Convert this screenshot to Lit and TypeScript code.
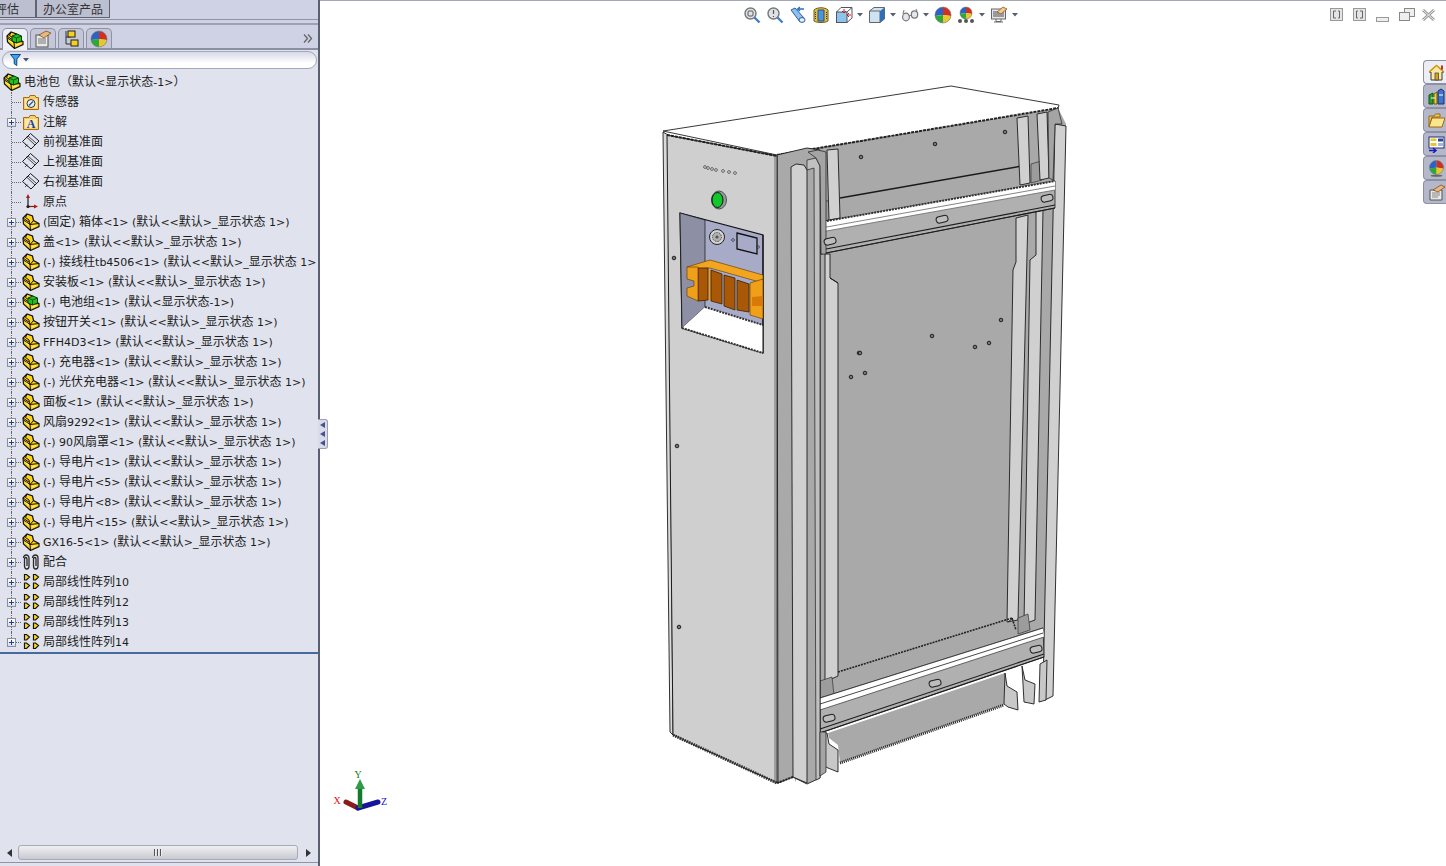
import { LitElement, html, css, svg } from 'lit';
import { customElement } from 'lit/decorators.js';

// small helper: draws an icon in a fixed box
const ic = (w: number, h: number, body: unknown) =>
  html`<svg width=${w} height=${h} viewBox="0 0 ${w} ${h}">${body}</svg>`;

const partBody = svg`
  <path d="M1 5 L5 1 L10.5 3 L11.5 7.5 L17 10.5 L17 13.5 L8.5 17.5 L1.5 11 Z" fill="#ffd318" stroke="#111" stroke-width="1.2"/>
  <path d="M1 5 L7.5 9.5 L7 7 L3.5 4.5 L5 1 M7.5 9.5 L8 11.5 L11.5 7.5 M8.5 17.5 L8 11.5 L1.5 7 M8 11.5 L17 10.5" fill="none" stroke="#111"/>
  <path d="M3.5 9.5 L6.5 12 M10 14 L14 12.5" stroke="#fff3a0" fill="none"/>`;

const icons: Record<string, unknown> = {
  part: ic(18, 18, partBody),
  asm: ic(18, 18, svg`${partBody}<path d="M6 5 L11 3 L15.5 5 L15.5 10 L10.5 12 L6 10 Z" fill="#20c020" stroke="#063e06"/><path d="M6 5 L10.5 7 L15.5 5 M10.5 7 V12" fill="none" stroke="#063e06" stroke-width=".8"/>`),
  sensor: ic(18, 18, svg`<path d="M1.5 4.5 H7 L8 2.5 H13 L14 4.5 H16.5 V16.5 H1.5 Z" fill="#f6cf6a" stroke="#a86a10"/><rect x="3" y="6" width="12" height="9" fill="#fbe7a8"/><circle cx="9" cy="10.5" r="4" fill="#e8eef6" stroke="#333"/><path d="M7 12.5 L11 8.5" stroke="#2a4fa0" stroke-width="1.2"/>`),
  note: ic(18, 18, svg`<path d="M1.5 4.5 H7 L8 2.5 H13 L14 4.5 H16.5 V16.5 H1.5 Z" fill="#f6cf6a" stroke="#a86a10"/><rect x="3" y="6" width="12" height="9" fill="#fbe7a8"/><text x="9" y="15" text-anchor="middle" font-family="Liberation Serif" font-weight="700" font-size="12" fill="#1c3fb0">A</text>`),
  plane: ic(18, 18, svg`<path d="M8.5 .5 L17 8 L9 16 L.5 8.5 Z" fill="none" stroke="#1a1a1a"/><path d="M4.5 4 L13 12 M6 3 L14.5 10.5" stroke="#1a1a1a" stroke-width=".8"/><path d="M3 11 L6 14 M3 14 L6 11" stroke="#1a1a1a" stroke-dasharray="1 1"/>`),
  origin: ic(18, 18, svg`<path d="M6 15 V3" stroke="#1a1a1a" stroke-width="1.2"/><path d="M6 1 L4 5 H8 Z" fill="#b01818"/><path d="M6 13.5 H14" stroke="#8c1515" stroke-width="1.2"/><path d="M16 13.5 L12 11.5 V15.5 Z" fill="#b01818"/><circle cx="6" cy="13.5" r="1.6" fill="#222"/>`),
  mate: ic(18, 18, svg`<path d="M1.5 5 C1.5 1 7 1 7 5 V13 C7 17 2.5 17 2.5 13 V6 C2.5 4 5 4 5 6 V13" fill="none" stroke="#2a2a2a" stroke-width="1.3"/><path d="M10.5 5 C10.5 1 16 1 16 5 V13 C16 17 11.5 17 11.5 13 V6 C11.5 4 14 4 14 6 V13" fill="none" stroke="#2a2a2a" stroke-width="1.3"/>`),
  pattern: ic(18, 18, svg`
    <g fill="#ffd818" stroke="#111" stroke-width="1.2">
      <path d="M2.5 1.5 H4.5 L7.5 4 L4.5 7 H2.5 Z"/><path d="M11.5 1.5 H13.5 L16.5 4 L13.5 7 H11.5 Z"/>
      <path d="M2.5 10 H4.5 L7.5 12.5 L4.5 15.5 H2.5 Z"/><path d="M11.5 10 H13.5 L16.5 12.5 L13.5 15.5 H11.5 Z"/>
    </g>`),
};

const ball = (id: string, cx: number, cy: number, r: number) => svg`
  <path d="M${cx} ${cy} L${cx} ${cy - r} A${r} ${r} 0 0 0 ${cx - r} ${cy + 1} Z" fill="#2a62c8"/>
  <path d="M${cx} ${cy} L${cx} ${cy - r} A${r} ${r} 0 0 1 ${cx + r} ${cy + 1} Z" fill="#d03020"/>
  <path d="M${cx} ${cy} L${cx - r} ${cy + 1} A${r} ${r} 0 0 0 ${cx} ${cy + r} Z" fill="#30a838"/>
  <path d="M${cx} ${cy} L${cx + r} ${cy + 1} A${r} ${r} 0 0 1 ${cx} ${cy + r} Z" fill="#e8c830"/>
  <circle cx=${cx} cy=${cy} r=${r} fill="none" stroke="#777" stroke-width=".6" data-k=${id}/>`;

const zoomGlass = svg`<circle cx="7.5" cy="7.5" r="5.5" fill="#dfe3e8" stroke="#777" stroke-width="1.4"/><path d="M11.5 11.5 L16.5 16.5" stroke="#3f7fd0" stroke-width="2.4"/>`;

const tools: { icon: unknown; arrow?: boolean }[] = [
  { icon: ic(18, 18, svg`${zoomGlass}<rect x="5" y="5" width="5" height="5" rx="1" fill="none" stroke="#555"/>`) },
  { icon: ic(18, 18, svg`${zoomGlass}<path d="M7.5 4 V8 M7.5 10 V11" stroke="#555" stroke-width="1.2"/>`) },
  { icon: ic(18, 18, svg`<path d="M2 4 L6 2 L15 12 L11 16 Z" fill="#8cc0ee" stroke="#2b5f98"/><ellipse cx="13" cy="14" rx="3" ry="2.4" fill="#e4f2fc" stroke="#2b5f98"/><path d="M15 3 H9 M11 1 L8.5 3 L11 5" fill="none" stroke="#2f6fc0" stroke-width="1.3"/>`) },
  { icon: ic(18, 18, svg`<path d="M2 4 C5 1 13 1 16 4 V15 C13 17 5 17 2 15 Z" fill="#e2c040" stroke="#705a18"/><path d="M6 4 H12 V15 H6 Z" fill="#4f94d8" stroke="#264f80"/><path d="M3.5 6 V14 M14.5 6 V14" stroke="#3a3a3a" stroke-dasharray="1 1"/>`) },
  { icon: ic(18, 18, svg`<path d="M6 1.5 H17 V12 L12 16.5 H1.5 V6 Z" fill="#fff" stroke="#555"/><rect x="1.5" y="6" width="10.5" height="10.5" fill="#8cc4ee" stroke="#555"/><path d="M12 6 L17 1.5" stroke="#555"/><path d="M9 3 V7 M7 5 L9 7 L11 5 M16 9 H12 M14 7 L12 9 L14 11" fill="none" stroke="#c02020"/>`), arrow: true },
  { icon: ic(18, 18, svg`<path d="M1.5 5 L6 1.5 H16.5 V13 L12 16.5 H1.5 Z" fill="#cfe2f3" stroke="#666"/><path d="M1.5 5 H12 V16.5" fill="none" stroke="#666"/><path d="M12 5 L16.5 1.5 V13 L12 16.5 Z" fill="#2f6fb8"/>`), arrow: true },
  { icon: ic(18, 18, svg`<g fill="#e4e8ee" stroke="#777" stroke-width="1.2"><ellipse cx="5" cy="11" rx="3.4" ry="3.8"/><ellipse cx="13.5" cy="8.5" rx="3.2" ry="3.6"/></g><path d="M8 10 L10.5 9 M2 8 L3 4 M16 5 L15 3" stroke="#777" fill="none"/>`), arrow: true },
  { icon: ic(18, 18, ball('a', 9, 9, 8)) },
  { icon: ic(18, 18, svg`${ball('b', 9, 7, 6)}<g fill="#555"><circle cx="3" cy="15" r="2"/><circle cx="9" cy="15" r="2"/><circle cx="15" cy="15" r="2"/></g>`), arrow: true },
  { icon: ic(18, 18, svg`<rect x="1.5" y="3" width="14" height="10" fill="#e6e6e6" stroke="#666"/><rect x="3" y="5" width="11" height="6" fill="#9a9a9a"/><path d="M6 13 V15.5 H11 V13 M4 16 H13" fill="none" stroke="#666"/><path d="M7 6 L13 1 L17 3 L11 8 Z" fill="#f0c890" stroke="#8a5a20" stroke-width=".8"/>`), arrow: true },
];

const taskIcons: unknown[] = [
  ic(17, 17, svg`<path d="M1 8 L8.5 1.5 L16 8 L14 8 V16 H3 V8 Z" fill="#f7e9a8" stroke="#3a3a3a"/><path d="M1 8 L8.5 1.5 L16 8" fill="none" stroke="#d99a10" stroke-width="1.6"/><rect x="7" y="9" width="3.5" height="7" fill="#d8a020" stroke="#3a3a3a" stroke-width=".7"/><rect x="13" y="1.5" width="2" height="4" fill="#c03020"/>`),
  ic(17, 17, svg`<path d="M1 7 L5 5 V16 H1 Z" fill="#28a028" stroke="#14501a"/><path d="M6 6 L9 4 V16 H6 Z" fill="#f0d030" stroke="#6a5a10"/><path d="M10 3 L13 1 L16 3 V16 H10 Z" fill="#3f74d0" stroke="#1a3060"/><path d="M3 10 H7 M11 7 H15" stroke="#fff"/>`),
  ic(17, 17, svg`<path d="M1 4 H6 L7.5 2 H12 V5 H4 L1 15 Z" fill="#f0c860" stroke="#9a6a10"/><path d="M4 6 H17 L14 15 H1 Z" fill="#fbe58e" stroke="#9a6a10"/>`),
  ic(17, 17, svg`<rect x="1" y="1" width="15" height="11" fill="#fff" stroke="#22306a"/><rect x="2.5" y="2.5" width="6" height="2.5" fill="#e8c830"/><rect x="2.5" y="7" width="6" height="3" fill="#e8c830"/><rect x="10" y="2.5" width="5" height="3" fill="#2a4aa0"/><rect x="10" y="7" width="5" height="3" fill="#a8b4d8"/><path d="M1 14.5 H7 M5 12 L8 14.5 L5 17" fill="none" stroke="#1a1ac0" stroke-width="1.5"/>`),
  ic(17, 17, svg`${ball('c', 8.5, 7.5, 7)}<ellipse cx="8.5" cy="15.8" rx="6" ry="1" fill="#666"/>`),
  ic(17, 17, svg`<path d="M2 6 H14 V16 H2 Z" fill="#e8e8e8" stroke="#555"/><path d="M4 9 H12 M4 11 H12 M4 13 H10" stroke="#888"/><path d="M5 6 L13 1 L17 3 L10 8 Z" fill="#e8b880" stroke="#80501c" stroke-width=".8"/>`),
];

const cfg = '(默认<<默认>_显示状态 1>)';
const rows: { icon: string; text: string; exp?: boolean }[] = [
  { icon: 'sensor', text: '传感器' },
  { icon: 'note', text: '注解', exp: true },
  { icon: 'plane', text: '前视基准面' },
  { icon: 'plane', text: '上视基准面' },
  { icon: 'plane', text: '右视基准面' },
  { icon: 'origin', text: '原点' },
  { icon: 'part', text: `(固定) 箱体<1> ${cfg}`, exp: true },
  { icon: 'part', text: `盖<1> ${cfg}`, exp: true },
  { icon: 'part', text: `(-) 接线柱tb4506<1> ${cfg}`, exp: true },
  { icon: 'part', text: `安装板<1> ${cfg}`, exp: true },
  { icon: 'asm', text: '(-) 电池组<1> (默认<显示状态-1>)', exp: true },
  { icon: 'part', text: `按钮开关<1> ${cfg}`, exp: true },
  { icon: 'part', text: `FFH4D3<1> ${cfg}`, exp: true },
  { icon: 'part', text: `(-) 充电器<1> ${cfg}`, exp: true },
  { icon: 'part', text: `(-) 光伏充电器<1> ${cfg}`, exp: true },
  { icon: 'part', text: `面板<1> ${cfg}`, exp: true },
  { icon: 'part', text: `风扇9292<1> ${cfg}`, exp: true },
  { icon: 'part', text: `(-) 90风扇罩<1> ${cfg}`, exp: true },
  { icon: 'part', text: `(-) 导电片<1> ${cfg}`, exp: true },
  { icon: 'part', text: `(-) 导电片<5> ${cfg}`, exp: true },
  { icon: 'part', text: `(-) 导电片<8> ${cfg}`, exp: true },
  { icon: 'part', text: `(-) 导电片<15> ${cfg}`, exp: true },
  { icon: 'part', text: `GX16-5<1> ${cfg}`, exp: true },
  { icon: 'mate', text: '配合', exp: true },
  { icon: 'pattern', text: '局部线性阵列10', exp: true },
  { icon: 'pattern', text: '局部线性阵列12', exp: true },
  { icon: 'pattern', text: '局部线性阵列13', exp: true },
  { icon: 'pattern', text: '局部线性阵列14', exp: true },
];

// latin runs are 11px, chinese runs 12px, like the original tree font
const label = (t: string) =>
  t.split(/([\u3000-\u303f\u4e00-\u9fff\uff00-\uffef]+)/).map((p, i) =>
    i % 2 ? html`<span class="cjk">${p}</span>` : p);

const holes: [number, number][] = [
  [861, 157], [935, 144], [1005, 132], [859, 353], [851, 377], [865, 373], [932, 336],
  [975, 347], [989, 343], [1001, 320], [674, 258], [677, 446], [679, 627], [860, 353],
];
const slots: [number, number][] = [
  [830, 241], [942, 219], [1047, 198], [829, 718], [935, 683], [1036, 649],
];

const model = svg`
  <!-- lid -->
  <path d="M663 131 L951 86 L1059 105 L1058 109 L777 155 Z" fill="#fff" stroke="#222" stroke-width=".9"/>
  <!-- back, down to the lower bar -->
  <path d="M777 155 L1058 108 L1066 124 L1052 650 L820 733 L795 782 Z" fill="#a9a9a9"/>
  <path d="M777 155 L1058 108" stroke="#222" stroke-width="2" stroke-dasharray="3 1" fill="none"/>

  <!-- upper ledge -->
  <path d="M840 198 L1022 166" stroke="#1a1a1a" stroke-width="1.6" fill="none"/>
  <path d="M821 202 L832 200 L835 218 L821 222 Z" fill="#9c9c9c" stroke="#333" stroke-width=".7"/>
  <path d="M1031 164 L1041 161 L1042 180 L1031 183 Z" fill="#9c9c9c" stroke="#333" stroke-width=".7"/>
  <!-- upright strips, top -->
  <g fill="#d0d0d0" stroke="#1c1c1c" stroke-width=".9">
    <path d="M827 150 L838 149 L840 218 L829 220 Z"/>
    <path d="M1017 118 L1028 116 L1030 183 L1020 185 Z"/>
    <path d="M1037 114 L1047 112 L1049 178 L1040 180 Z"/>
    <path d="M1055 124 L1066 126 L1053 696 L1045 700 L1043 690 Z"/>
  </g>
  <path d="M1048 112 L1058 108 L1062 124 L1055 124 L1053 180 L1049 178 Z" fill="#a4a4a4" stroke="#222" stroke-width=".7"/>

  <!-- main panel side strips -->
  <g fill="#d0d0d0" stroke="#1c1c1c" stroke-width=".9">
    <path d="M825 254 L830 254 L830 278 L838 283 L838 676 L825 682 Z"/>
    <path d="M1016 218 L1028 215 L1018 620 L1007 622 L1013 270 L1016 262 Z"/>
    <path d="M1036 212 L1043 210 L1035 620 L1024 624 L1030 260 L1036 255 Z"/>
  </g>
  <path d="M838 283 L830 278 M1008 622 L1013 618" stroke="#1c1c1c" fill="none"/>
  <!-- lower ledge -->
  <path d="M838 672 L1012 618 L1016 630" fill="none" stroke="#222" stroke-width="1.6" stroke-dasharray="2 1"/>
  <path d="M820 681 L832 677 L834 695 L820 698 Z" fill="#9c9c9c" stroke="#333" stroke-width=".7"/>
  <path d="M1018 618 L1028 614 L1030 630 L1018 634 Z" fill="#9c9c9c" stroke="#333" stroke-width=".7"/>

  <!-- upper bar -->
  <path d="M821 222 L1055 181 L1055 208 L821 254 Z" fill="#b0b0b0" stroke="#222" stroke-width=".8"/>
  <path d="M821 222 L1055 181 L1055 190 L821 232 Z" fill="#fff"/>
  <path d="M821 222 L1055 181" stroke="#333" stroke-width="2" stroke-dasharray="2 1" fill="none"/>
  <path d="M821 228 L1055 186 M821 232 L1055 190" stroke="#666" stroke-width=".8" fill="none"/>
  <path d="M821 250 L1055 205 M821 254 L1055 208" stroke="#1c1c1c" stroke-width="1.1" fill="none"/>

  <!-- lower bar -->
  <path d="M820 698 L1043 628 L1044 657 L820 733 Z" fill="#b0b0b0" stroke="#222" stroke-width=".8"/>
  <path d="M820 698 L1043 628 L1044 637 L820 710 Z" fill="#fff"/>
  <path d="M820 698 L1043 628 M820 704 L1043 633" stroke="#333" stroke-width=".9" fill="none"/>
  <path d="M820 710 L1044 637" stroke="#555" stroke-width=".9" fill="none"/>
  <path d="M820 729 L1044 654 M820 733 L1044 657" stroke="#1c1c1c" stroke-width="1.1" fill="none"/>

  <!-- under the lower bar -->
  <path d="M828 733 L1005 673 L1004 705 L840 763 L838 745 L829 738 Z" fill="#a9a9a9"/>
  <path d="M840 763 L1004 705" stroke="#222" stroke-width="3" stroke-dasharray="1 1" fill="none"/>
  <g fill="#c8c8c8" stroke="#1c1c1c" stroke-width=".9">
    <path d="M827 733 L829 744 L838 750 L838 772 L828 768 L820 764 L820 735 Z"/>
    <path d="M1005 673 L1007 686 L1017 692 L1018 710 L1008 707 L1004 704 Z"/>
    <path d="M1022 666 L1025 680 L1035 684 L1034 704 L1024 702 Z"/>
  </g>
  <path d="M1040 664 L1047 660 L1046 700 L1039 702 Z" fill="#c8c8c8" stroke="#1c1c1c" stroke-width=".9"/>

  <!-- corner post -->
  <path d="M777 155 L807 148 L820 150 L820 778 L807 784 L793 777 L778 783 Z" fill="#a9a9a9" stroke="#1c1c1c" stroke-width=".9"/>
  <path d="M791 167 L796 164 L804 165 L807 170 L807 783 L793 777 Z" fill="#d0d0d0" stroke="#1c1c1c" stroke-width=".9"/>
  <path d="M807 160 L816 158 L820 166 L820 778 L816 780 L814 168 L807 170 Z" fill="#c0c0c0" stroke="#1c1c1c" stroke-width=".7"/>
  <path d="M808 152 L818 150 L826 152 L826 254 L821 254 L820 166 L816 158 Z" fill="#a4a4a4" stroke="#1c1c1c" stroke-width=".7"/>
  <path d="M820 732 L826 732 L826 772 L820 776 Z" fill="#a4a4a4" stroke="#1c1c1c" stroke-width=".7"/>

  <!-- front face -->
  <path d="M663 132 L668 135 L673 735 L670 732 Z" fill="#dadada" stroke="#1c1c1c" stroke-width=".9"/>
  <path d="M667 135 L777 156 L777 783 L673 735 Z" fill="#cfcfcf" stroke="#1c1c1c" stroke-width="1"/>
  <path d="M667 135 L777 156" stroke="#222" stroke-width="2" stroke-dasharray="3 1" fill="none"/>
  <path d="M673 735 L777 783" stroke="#333" stroke-width="3" stroke-dasharray="1.5 1" fill="none"/>
  <path d="M777 783 L793 777" stroke="#222" stroke-width="2" stroke-dasharray="2 1" fill="none"/>
  <path d="M775 156 V783" stroke="#444" stroke-width=".7" fill="none"/>

  <!-- window in the front face -->
  <path d="M680 213 L763 235 L763 353 L682 328 Z" fill="#a8abc8" stroke="#111" stroke-width="1.2"/>
  <path d="M680 213 L705 220 L705 307 L682 328 Z" fill="#8d90a4" stroke="#111" stroke-width=".7"/>
  <path d="M682 328 L705 307 L763 325 L763 353 Z" fill="#fff"/>
  <path d="M705 307 L763 325" stroke="#333" stroke-width="2" stroke-dasharray="2 1" fill="none"/>
  <path d="M682 328 L763 353" stroke="#333" stroke-width="2" stroke-dasharray="2 1" fill="none"/>
  <path d="M763 235 V353" stroke="#111" fill="none"/>

  <!-- connector and plate -->
  <circle cx="717" cy="237" r="7.5" fill="#d4d4d4" stroke="#222"/>
  <circle cx="717" cy="237" r="4.5" fill="#b0b0b0" stroke="#333" stroke-width=".8" stroke-dasharray="1.5 1"/>
  <circle cx="717" cy="237" r="1.6" fill="#555"/>
  <path d="M737 233 L757 238 L757 254 L737 249 Z" fill="#a8abc8" stroke="#111" stroke-width="1.3"/>
  <circle cx="733" cy="240" r="1.4" fill="none" stroke="#333" stroke-width=".7"/>
  <circle cx="758" cy="247" r="1.4" fill="none" stroke="#333" stroke-width=".7"/>

  <!-- orange terminal block -->
  <path d="M687 267 L710 260 L763 275 L763 283 L710 268 L697 269 Z" fill="#f2a620" stroke="#5a3000" stroke-width=".6"/>
  <path d="M698 268 L708 268 L708 300 L698 301 Z" fill="#a85806" stroke="#3a2000" stroke-width=".8"/>
  <path d="M687 267 L698 267 L698 301 L687 296 L687 288 L694 286 L694 281 L687 279 Z" fill="#f0a018" stroke="#5a3000" stroke-width=".6"/>
  <path d="M709 270 L711 270 L711 301 L709 300 Z" fill="#f0a018"/>
  <path d="M711 270 L722 274 L722 304 L711 301 Z" fill="#a85806" stroke="#3a2000" stroke-width=".8"/>
  <path d="M724 275 L735 278 L735 310 L724 306 Z" fill="#a85806" stroke="#3a2000" stroke-width=".8"/>
  <path d="M737 280 L749 284 L749 312 L737 310 Z" fill="#a85806" stroke="#3a2000" stroke-width=".8"/>
  <path d="M750 283 L763 279 L763 319 L750 315 Z" fill="#f0a018" stroke="#5a3000" stroke-width=".6"/>
  <path d="M752 297 L763 296 L763 306 L752 306 Z" fill="#d87a08"/>

  <!-- push button -->
  <ellipse cx="719" cy="200" rx="7.5" ry="9" fill="#9a9a9a" stroke="#333" stroke-width=".8"/>
  <ellipse cx="717.5" cy="200" rx="5.5" ry="7.5" fill="#0fc82c" stroke="#111"/>

  <!-- small dots above the button -->
  ${[705, 708, 712, 716, 723, 729, 735].map((x, i) => svg`<circle cx=${x} cy=${167 + i} r="1.4" fill="#e0e0e0" stroke="#333" stroke-width=".7"/>`)}

  <!-- holes and slots -->
  ${holes.map(([x, y]) => svg`<circle cx=${x} cy=${y} r="1.8" fill="#777" stroke="#222"/>`)}
  ${slots.map(([x, y]) => svg`<rect x=${x - 6} y=${y - 3} width="12" height="6.5" rx="3.2" transform="rotate(-14 ${x} ${y})" fill="#bdbdbd" stroke="#1c1c1c"/>`)}

  <!-- triad -->
  <path d="M358 808 L346 802" stroke="#8c1c1c" stroke-width="5" stroke-linecap="round"/>
  <path d="M358 808 L378 802" stroke="#16169a" stroke-width="5" stroke-linecap="round"/>
  <path d="M360 808 V788" stroke="#157a2a" stroke-width="4.5"/>
  <path d="M360 779 L355 789 H365 Z" fill="#2f9a48"/>
  <g font-family="Liberation Serif" font-size="10" text-anchor="middle">
    <text x="358" y="778" fill="#0e7a20">Y</text>
    <text x="337" y="804" fill="#e01010">X</text>
    <text x="384" y="805" fill="#1010e0">Z</text>
  </g>
`;

@customElement('app-root')
export class AppRoot extends LitElement {
  static styles = css`
    :host {
      display: flex;
      width: 1446px;
      height: 866px;
      overflow: hidden;
      background: #fff;
      font-family: "DejaVu Sans", "Noto Sans CJK SC", sans-serif;
      font-size: 11px;
      color: #1c1c1c;
    }
    svg { display: block; flex: none; }

    .side {
      flex: none;
      box-sizing: border-box;
      width: 320px;
      height: 866px;
      display: flex;
      flex-direction: column;
      background: #e0e3ed;
      border-right: 2px solid #5b6070;
    }
    .head {
      flex: none;
      height: 50px;
      box-sizing: border-box;
      background: #ced2e4;
      border-bottom: 2px solid #8a8fa2;
    }
    .docs {
      display: flex;
      height: 19px;
      overflow: hidden;
      border-bottom: 1px solid #8f93a4;
    }
    .doc {
      box-sizing: border-box;
      height: 18px;
      background: #bcbfd0;
      border: 1px solid #5f6372;
      border-top: none;
      font-family: "Noto Sans CJK SC", sans-serif;
      font-size: 12px;
      line-height: 17px;
      text-align: center;
      color: #333;
    }
    .doc.a { width: 37px; margin-left: -1px; text-align: left; text-indent: -5px; overflow: hidden; white-space: nowrap; }
    .doc.b { width: 74px; }
    .rule { height: 2px; margin-top: 3px; background: #9da1b2; }
    .ftabs { display: flex; align-items: flex-end; gap: 2px; padding: 3px 0 0 2px; height: 23px; box-sizing: border-box; }
    .ftab {
      box-sizing: border-box;
      width: 26px;
      height: 20px;
      display: flex;
      align-items: center;
      justify-content: center;
      background: #c3c7d8;
      border: 1px solid #8e92a4;
      border-bottom: none;
      border-radius: 5px 5px 0 0;
    }
    .ftab.on { background: #eef0f6; height: 22px; margin-bottom: -2px; }
    .more { margin-left: auto; margin-right: 5px; margin-bottom: 5px; }

    .filter {
      flex: none;
      box-sizing: border-box;
      height: 18px;
      margin: 1px 0 1px 2px;
      width: 315px;
      display: flex;
      align-items: center;
      gap: 2px;
      padding-left: 7px;
      border: 1px solid #a4a8b8;
      border-radius: 9px;
      background: linear-gradient(#d6d9e8, #fff 70%);
    }

    .tree {
      flex: none;
      height: 584px;
      box-sizing: border-box;
      padding-top: 2px;
      border-bottom: 2px solid #466a9c;
      overflow: hidden;
    }
    .row {
      display: flex;
      align-items: center;
      height: 20px;
      white-space: nowrap;
      overflow: hidden;
      width: 316px;
    }
    .row.root { padding-left: 3px; gap: 3px; }
    .gut {
      flex: none;
      position: relative;
      width: 22px;
      height: 20px;
    }
    /* tree connectors */
    .gut::before {
      content: "";
      position: absolute;
      left: 11px;
      top: 0;
      height: 20px;
      border-left: 1px dotted #666;
    }
    .gut::after {
      content: "";
      position: absolute;
      left: 12px;
      top: 10px;
      width: 9px;
      border-top: 1px dotted #666;
    }
    .last::before { height: 10px; }
    .exp {
      position: absolute;
      z-index: 1;
      left: 7px;
      top: 6px;
      box-sizing: border-box;
      width: 9px;
      height: 9px;
      border: 1px solid #8a8e9e;
      background: linear-gradient(#fff, #d8dbe6);
      display: flex;
      align-items: center;
      justify-content: center;
    }
    .ico { flex: none; width: 18px; margin-right: 3px; }
    .root .ico { margin-right: 0; }
    .cjk { font-family: "Noto Sans CJK SC", sans-serif; font-size: 12px; }
    .txt { line-height: 20px; }

    .rest {
      flex: 1;
      display: flex;
      flex-direction: column;
      justify-content: flex-end;
    }
    .hbar {
      display: flex;
      align-items: center;
      height: 17px;
      margin-bottom: 3px;
      border-bottom: 1px solid #9095a6;
      padding-bottom: 1px;
    }
    .hbar .end { flex: none; width: 18px; display: flex; justify-content: center; }
    .hbar .end.r { width: 20px; margin-left: auto; }
    .thumb {
      box-sizing: border-box;
      width: 280px;
      height: 15px;
      border: 1px solid #a8abb6;
      border-radius: 3px;
      background: linear-gradient(#f0f0f2, #dcdde2 50%, #c8c9d0);
      display: flex;
      align-items: center;
      justify-content: center;
      gap: 1px;
    }
    .thumb i { width: 1px; height: 7px; background: #555; box-shadow: 1px 0 #eee; margin-right: 1px; }

    .grip {
      position: absolute;
      left: 318px;
      top: 419px;
      box-sizing: border-box;
      width: 10px;
      height: 30px;
      background: #d8dbe8;
      border: 1px solid #9a9eb0;
      border-left: none;
      border-radius: 0 3px 3px 0;
      display: flex;
      flex-direction: column;
      align-items: center;
      justify-content: center;
      gap: 3px;
    }

    .view {
      flex: 1;
      position: relative;
      display: flex;
      flex-direction: column;
      border-top: 1px solid #a4a8b4;
    }
    .canvas { position: absolute; left: 0; top: -1px; }
    .bar {
      position: relative;
      display: flex;
      align-items: center;
      height: 28px;
      padding-left: 423px;
    }
    .tools { display: flex; align-items: center; gap: 5px; }
    .tool { display: flex; align-items: center; }
    .caret { width: 10px; display: flex; justify-content: flex-end; }
    .win { margin-left: auto; display: flex; align-items: center; gap: 9px; padding-right: 10px; }
    .win .box { box-sizing: border-box; width: 14px; height: 14px; }
    .tasks {
      position: relative;
      align-self: flex-end;
      margin-top: 31px;
      display: flex;
      flex-direction: column;
    }
    .task {
      box-sizing: border-box;
      width: 23px;
      height: 24px;
      padding-left: 4px;
      display: flex;
      align-items: center;
      background: #b4b8ca;
      border: 1px solid #8c90a2;
      border-right: none;
      border-radius: 4px 0 0 4px;
    }
    .task.on { background: #eceef4; }
  `;

  private caret() {
    return html`<span class="caret"><svg width="6" height="4" viewBox="0 0 6 4"><path d="M0 0 H6 L3 3.5 Z" fill="#5a5f70"/></svg></span>`;
  }

  private gutter(exp = false, last = false) {
    return html`<span class="gut ${last ? 'last' : ''}">
      ${exp ? html`<span class="exp"><svg width="7" height="7" viewBox="0 0 7 7"><path d="M1 3.5 H6 M3.5 1 V6" stroke="#24408a"/></svg></span>` : ''}
    </span>`;
  }

  render() {
    return html`
      <div class="side">
        <div class="head">
          <div class="docs">
            <div class="doc a">评估</div>
            <div class="doc b">办公室产品</div>
          </div>
          <div class="rule"></div>
          <div class="ftabs">
            <div class="ftab on">${icons.asm}</div>
            <div class="ftab">${ic(18, 18, svg`<rect x="2" y="5" width="12" height="12" fill="#e8e8e8" stroke="#555"/><path d="M4 9 H12 M4 11 H12 M4 13 H12" stroke="#777"/><path d="M5 5 L12 1 L17 3 L10 8 Z" fill="#e8b880" stroke="#80501c" stroke-width=".8"/>`)}</div>
            <div class="ftab">${ic(18, 18, svg`<path d="M4 1 V14 H9 M4 7 H9" fill="none" stroke="#333"/><rect x="6" y="1" width="7" height="6" fill="#f5d020" stroke="#222"/><rect x="9" y="10" width="7" height="6" fill="#f5d020" stroke="#222"/>`)}</div>
            <div class="ftab">${ic(18, 18, ball('d', 9, 9, 8))}</div>
            <div class="more"><svg width="10" height="9" viewBox="0 0 10 9"><path d="M1 .5 L4.5 4.5 L1 8.5 M5 .5 L8.5 4.5 L5 8.5" fill="none" stroke="#666" stroke-width="1.3"/></svg></div>
          </div>
        </div>
        <div class="filter">
          ${ic(11, 12, svg`<path d="M.5 .5 H10.5 L6.8 5 V11.5 L4.2 9.8 V5 Z" fill="#38a8e8" stroke="#14408a"/>`)}
          <svg width="6" height="4" viewBox="0 0 6 4"><path d="M0 0 H6 L3 3.5 Z" fill="#4a4f68"/></svg>
        </div>
        <div class="tree">
          <div class="row root">
            <span class="ico">${icons.asm}</span>
            <span class="txt"><span class="cjk">电池包（默认</span>&lt;<span class="cjk">显示状态</span>-1&gt;<span class="cjk">）</span></span>
          </div>
          ${rows.map((r, i) => html`
            <div class="row">
              ${this.gutter(r.exp, i === rows.length - 1)}
              <span class="ico">${icons[r.icon]}</span>
              <span class="txt">${label(r.text)}</span>
            </div>`)}
        </div>
        <div class="rest">
          <div class="hbar">
            <span class="end"><svg width="5" height="8" viewBox="0 0 5 8"><path d="M5 0 V8 L0 4 Z" fill="#333"/></svg></span>
            <div class="thumb"><i></i><i></i><i></i></div>
            <span class="end r"><svg width="5" height="8" viewBox="0 0 5 8"><path d="M0 0 V8 L5 4 Z" fill="#333"/></svg></span>
          </div>
        </div>
      </div>
      <div class="grip">
        ${[0, 1, 2].map(() => html`<svg width="5" height="6" viewBox="0 0 5 6"><path d="M5 0 V6 L0 3 Z" fill="#4a4f90"/></svg>`)}
      </div>
      <div class="view">
        <svg class="canvas" width="1126" height="866" viewBox="320 0 1126 866">${model}</svg>
        <div class="bar">
          <div class="tools">
            ${tools.map((t) => html`<span class="tool">${t.icon}${t.arrow ? this.caret() : ''}</span>`)}
          </div>
          <div class="win">
            <span class="box">${ic(14, 14, svg`<rect x=".5" y=".5" width="12" height="12" fill="#e4e4e4" stroke="#999"/><path d="M6 3 H3.5 V10 H6 M8 3 H9.5 V10 H8" fill="none" stroke="#666"/>`)}</span>
            <span class="box">${ic(14, 14, svg`<rect x=".5" y=".5" width="12" height="12" fill="#e4e4e4" stroke="#999"/><path d="M5 3 H3.5 V10 H5 M7 3 H9.5 V10 H7" fill="none" stroke="#666"/>`)}</span>
            <span class="box">${ic(14, 14, svg`<rect x=".5" y="9.5" width="12" height="4" fill="#eee" stroke="#999"/>`)}</span>
            <span class="box">${ic(16, 14, svg`<rect x="5.5" y=".5" width="10" height="8" fill="#eee" stroke="#888"/><rect x=".5" y="4.5" width="10" height="8" fill="#eee" stroke="#888"/>`)}</span>
            <span class="box">${ic(14, 14, svg`<path d="M1 2 L12 12 M12 2 L1 12" stroke="#999" stroke-width="3"/><path d="M1 2 L12 12 M12 2 L1 12" stroke="#eee" stroke-width="1"/>`)}</span>
          </div>
        </div>
        <div class="tasks">
          ${taskIcons.map((t, i) => html`<div class="task ${i === 0 ? 'on' : ''}">${t}</div>`)}
        </div>
      </div>
    `;
  }
}
